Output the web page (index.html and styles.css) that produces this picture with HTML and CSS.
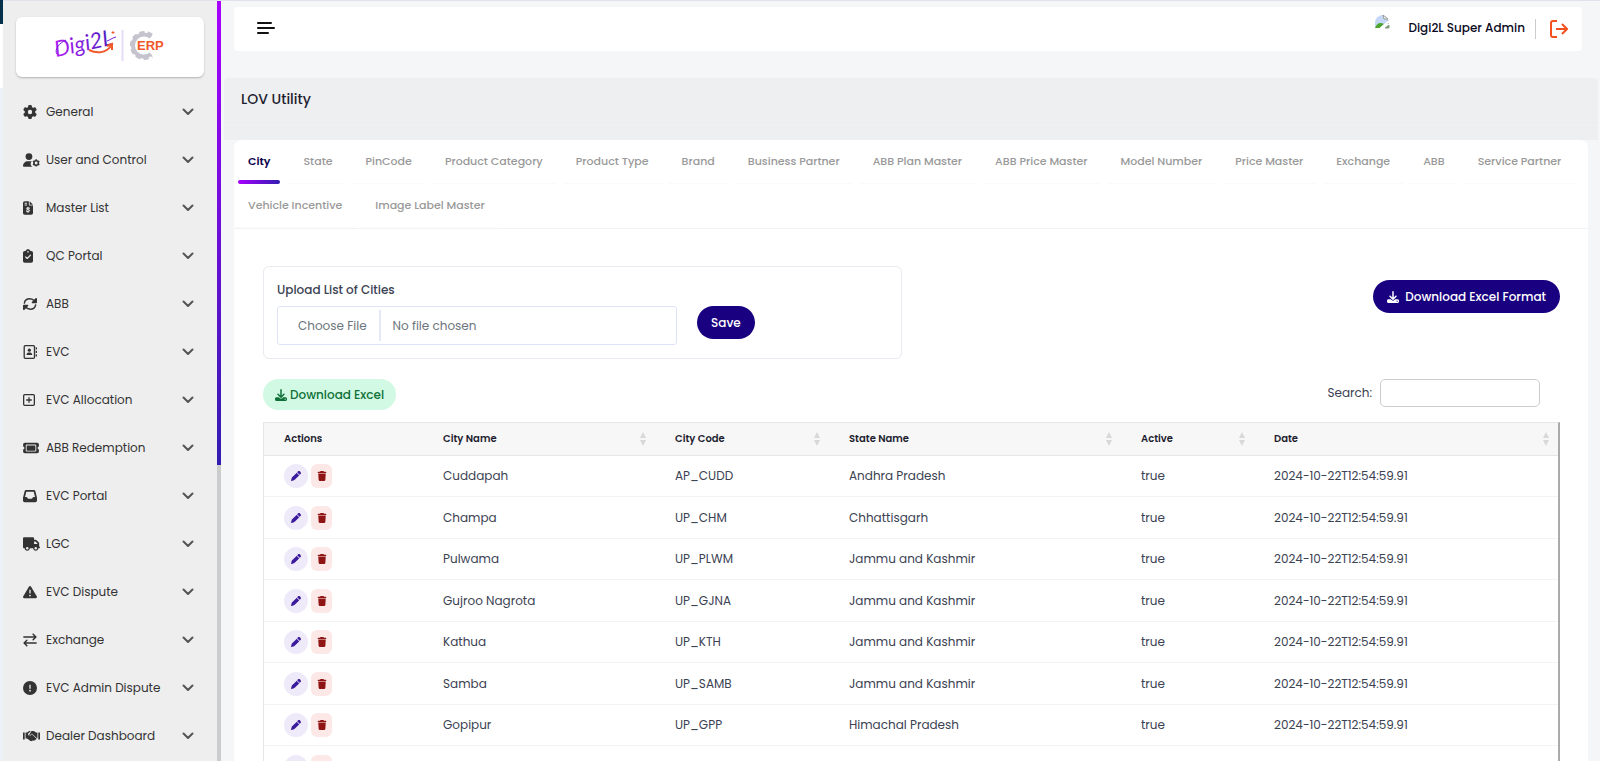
FILE: index.html
```html
<!DOCTYPE html>
<html lang="en">
<head>
  <meta charset="UTF-8">
  <meta name="viewport" content="width=device-width, initial-scale=1">
  <title>LOV Utility</title>
  <link rel="stylesheet" href="styles.css">
</head>
<body>
  <!-- icon sprite -->
  <svg class="sprite" aria-hidden="true">
    <symbol id="i-gear" viewBox="0 0 512 512"><path d="M495.9 166.6c3.2 8.7 .5 18.4-6.4 24.6l-43.3 39.4c1.1 8.3 1.7 16.8 1.7 25.4s-.6 17.1-1.7 25.4l43.3 39.4c6.9 6.2 9.6 15.9 6.4 24.6c-4.4 11.9-9.7 23.3-15.8 34.3l-4.7 8.1c-6.6 11-14 21.4-22.1 31.2c-5.9 7.2-15.7 9.6-24.5 6.8l-55.7-17.7c-13.4 10.3-28.2 18.9-44 25.4l-12.5 57.1c-2 9.1-9 16.3-18.2 17.8c-13.8 2.3-28 3.5-42.5 3.5s-28.7-1.2-42.5-3.5c-9.2-1.5-16.2-8.7-18.2-17.8l-12.5-57.1c-15.8-6.5-30.6-15.1-44-25.4L83.1 425.9c-8.8 2.8-18.6 .3-24.5-6.8c-8.1-9.8-15.5-20.2-22.1-31.2l-4.7-8.1c-6.1-11-11.4-22.4-15.8-34.3c-3.2-8.7-.5-18.4 6.4-24.6l43.3-39.4C64.6 273.1 64 264.6 64 256s.6-17.1 1.7-25.4L22.4 191.2c-6.9-6.2-9.6-15.9-6.4-24.6c4.4-11.9 9.7-23.3 15.8-34.3l4.7-8.1c6.6-11 14-21.4 22.1-31.2c5.9-7.2 15.7-9.6 24.5-6.8l55.7 17.7c13.4-10.3 28.2-18.9 44-25.4l12.5-57.1c2-9.1 9-16.3 18.2-17.8C227.3 1.2 241.5 0 256 0s28.7 1.2 42.5 3.5c9.2 1.5 16.2 8.7 18.2 17.8l12.5 57.1c15.8 6.5 30.6 15.1 44 25.4l55.7-17.7c8.8-2.8 18.6-.3 24.5 6.8c8.1 9.8 15.5 20.2 22.1 31.2l4.7 8.1c6.1 11 11.4 22.4 15.8 34.3zM256 336a80 80 0 1 0 0-160 80 80 0 1 0 0 160z"/></symbol>
    <symbol id="i-user-gear" viewBox="0 0 640 512"><path d="M224 0a128 128 0 1 1 0 256 128 128 0 1 1 0-256zM178.300 304h91.400c20.600 0 40.400 3.500 58.800 9.900a120 120 0 0 0 24 198.100H29.700C13.300 512 0 498.700 0 482.300 0 383.800 79.800 304 178.300 304z"/><circle cx="496" cy="368" r="84" fill="none" stroke="currentColor" stroke-width="60"/><path d="M496 232v48M496 456v48M378 300l42 24M572 412l42 24M378 436l42-24M572 324l42-24" stroke="currentColor" stroke-width="56"/></symbol>
    <symbol id="i-invoice" viewBox="0 0 384 512"><path fill-rule="evenodd" d="M64 0C28.700 0 0 28.700 0 64V448c0 35.300 28.700 64 64 64H320c35.300 0 64-28.700 64-64V160H256c-17.700 0-32-14.300-32-32V0H64zM256 0V128H384L256 0zM64 56H150V92H64zM64 120H150V156H64z"/><path class="knock" d="M246 264c-20-14-96-22-100 16-4 42 100 26 98 72-2 42-80 36-108 16M192 226v34M192 388v34"/></symbol>
    <symbol id="i-clipboard" viewBox="0 0 384 512"><path fill-rule="evenodd" d="M192 0c-41.800 0-77.400 26.700-90.500 64H64C28.700 64 0 92.700 0 128V448c0 35.300 28.700 64 64 64H320c35.300 0 64-28.700 64-64V128c0-35.300-28.700-64-64-64H282.500C269.400 26.700 233.800 0 192 0zm0 64a32 32 0 1 1 0 64 32 32 0 1 1 0-64z"/><path class="knock" d="M96 288l64 64 128-128"/></symbol>
    <symbol id="i-rotate" viewBox="0 0 512 512"><path class="line" d="M50 224C64 128 150 64 250 64c78 0 130 32 190 98M462 288c-14 96-100 160-200 160-78 0-130-32-190-98"/><path d="M480 32c18 0 32 14 32 30v138c0 16-12 30-30 30H346c-26 0-38-30-20-48L456 42c8-8 16-10 24-10zM32 480c-18 0-32-14-32-30V312c0-16 12-30 30-30h136c26 0 38 30 20 48L56 470c-8 8-16 10-24 10z"/></symbol>
    <symbol id="i-book" viewBox="0 0 512 512"><rect class="thin" x="44" y="24" width="376" height="464" rx="40"/><circle cx="232" cy="190" r="58"/><path d="M128 366c0-60 30-92 74-92h60c44 0 74 32 74 92zM464 80h24c13 0 24 8 24 24v40c0 14-10 24-24 24h-24zM464 208h24c13 0 24 8 24 24v40c0 14-10 24-24 24h-24zM464 336h24c13 0 24 8 24 24v40c0 14-10 24-24 24h-24z"/></symbol>
    <symbol id="i-plus-box" viewBox="0 0 448 512"><rect class="thin" x="24" y="56" width="400" height="400" rx="40"/><path class="thin" d="M224 168v176M136 256h176"/></symbol>
    <symbol id="i-ticket" viewBox="0 0 576 512"><path d="M64 64C28.700 64 0 92.700 0 128v64c0 8.800 7.400 15.700 15.700 18.600C34.500 217.100 48 235 48 256s-13.500 38.900-32.300 45.400C7.400 304.300 0 311.200 0 320v64c0 35.300 28.700 64 64 64H512c35.300 0 64-28.700 64-64V320c0-8.800-7.400-15.700-15.700-18.600C541.500 294.900 528 277 528 256s13.500-38.900 32.300-45.400c8.300-2.900 15.700-9.800 15.700-18.600V128c0-35.300-28.700-64-64-64H64zm64 112l0 160c0 8.800 7.200 16 16 16H432c8.800 0 16-7.200 16-16V176c0-8.800-7.200-16-16-16H144c-8.800 0-16 7.200-16 16zM96 160c0-17.700 14.300-32 32-32H448c17.700 0 32 14.300 32 32V352c0 17.700-14.300 32-32 32H128c-17.700 0-32-14.300-32-32V160z"/></symbol>
    <symbol id="i-inbox" viewBox="0 0 512 512"><path d="M121 32C91.600 32 66 52 58.900 80.500L1.900 308.400C.6 313.500 0 318.700 0 323.900V416c0 35.300 28.700 64 64 64H448c35.300 0 64-28.700 64-64V323.900c0-5.200-.6-10.400-1.900-15.500l-57-227.900C446 52 420.400 32 391 32H121zm0 64H391l48 192H387.800c-12.100 0-23.200 6.800-28.600 17.700l-14.300 28.600c-5.400 10.800-16.500 17.700-28.600 17.700H195.800c-12.100 0-23.200-6.800-28.600-17.700l-14.300-28.600c-5.400-10.800-16.500-17.700-28.600-17.700H73L121 96z"/></symbol>
    <symbol id="i-truck" viewBox="0 0 640 512"><path d="M48 0C21.500 0 0 21.500 0 48V368c0 26.500 21.500 48 48 48H64c0 53 43 96 96 96s96-43 96-96H384c0 53 43 96 96 96s96-43 96-96h32c17.700 0 32-14.300 32-32s-14.300-32-32-32V237.300c0-17-6.700-33.300-18.700-45.300L512 114.700c-12-12-28.300-18.700-45.300-18.700H416V48c0-26.500-21.500-48-48-48H48zM416 160h50.700L544 237.300V256H416V160zM112 416a48 48 0 1 1 96 0 48 48 0 1 1 -96 0zm368-48a48 48 0 1 1 0 96 48 48 0 1 1 0-96z"/></symbol>
    <symbol id="i-warning" viewBox="0 0 512 512"><path d="M256 32c14.200 0 27.300 7.500 34.500 19.800l216 368c7.300 12.400 7.300 27.700 .2 40.100S486.300 480 472 480H40c-14.300 0-27.600-7.700-34.700-20.100s-7-27.800 .2-40.100l216-368C228.700 39.500 241.800 32 256 32zm0 128c-13.300 0-24 10.700-24 24V296c0 13.300 10.700 24 24 24s24-10.700 24-24V184c0-13.300-10.700-24-24-24zm32 224a32 32 0 1 0 -64 0 32 32 0 1 0 64 0z"/></symbol>
    <symbol id="i-swap" viewBox="0 0 512 512"><path class="line" d="M32 144H470M370 42l102 102-102 102M480 368H42M142 266L40 368l102 102"/></symbol>
    <symbol id="i-alert" viewBox="0 0 512 512"><path d="M256 512A256 256 0 1 0 256 0a256 256 0 1 0 0 512zm0-384c13.300 0 24 10.700 24 24V264c0 13.300-10.700 24-24 24s-24-10.700-24-24V152c0-13.300 10.700-24 24-24zM224 352a32 32 0 1 1 64 0 32 32 0 1 1 -64 0z"/></symbol>
    <symbol id="i-handshake" viewBox="0 0 640 512"><path d="M0 128h64v256H0zM576 128h64v256h-64zM96 128h56l64-48c20-14 50-16 74-4l-84 78c-22 22-22 56 0 76 24 22 62 20 86-4l38-36 168 150c20 20 6 52-24 52-8 30-36 40-58 26-14 22-44 28-64 12-30 28-70 24-96-2L150 352H96zM312 80c30-20 84-20 110 0l66 48h56v208l-24-6-172-152c-10-10-22-6-32 2l-54 50c-16 14-38 4-34-16z"/></symbol>
    <symbol id="i-chevron" viewBox="0 0 12 8"><path d="M1.500 1.500L6 6l4.500-4.500" fill="none" stroke="currentColor" stroke-width="2" stroke-linecap="round" stroke-linejoin="round"/></symbol>
    <symbol id="i-pencil" viewBox="0 0 512 512"><path d="M410.300 231l11.300-11.300-33.900-33.900-62.100-62.100L291.700 89.800l-33.900 33.900L58.600 322.900c-10.400 10.400-18 23.300-22.200 37.400L1 480.700c-2.500 8.400-.2 17.500 6.100 23.700s15.300 8.500 23.700 6.100l120.300-35.400c14.100-4.200 27-11.800 37.400-22.200L387.700 253.700 410.300 231zM362.700 18.700L314.300 67.100l130 130 48.400-48.400c25-25 25-65.500 0-90.500L453.300 18.700c-25-25-65.500-25-90.500 0z"/></symbol>
    <symbol id="i-trash" viewBox="0 0 448 512"><path d="M135.200 17.700L128 32H32C14.300 32 0 46.300 0 64S14.300 96 32 96H416c17.700 0 32-14.300 32-32s-14.300-32-32-32H320l-7.200-14.300C307.400 6.800 296.300 0 284.200 0H163.800c-12.100 0-23.200 6.800-28.600 17.700zM416 128H32L53.200 467c1.600 25.300 22.600 45 47.900 45H346.900c25.300 0 46.300-19.700 47.900-45L416 128z"/></symbol>
    <symbol id="i-download" viewBox="0 0 512 512"><path d="M288 32c0-17.700-14.300-32-32-32s-32 14.300-32 32V274.700l-73.400-73.400c-12.500-12.500-32.800-12.500-45.300 0s-12.500 32.800 0 45.300l128 128c12.500 12.500 32.800 12.500 45.300 0l128-128c12.500-12.500 12.500-32.800 0-45.300s-32.800-12.500-45.300 0L288 274.700V32zM64 352c-35.300 0-64 28.700-64 64v32c0 35.300 28.700 64 64 64H448c35.300 0 64-28.700 64-64V416c0-35.300-28.700-64-64-64H346.500l-45.300 45.300c-25 25-65.500 25-90.500 0L165.500 352H64zm368 56a24 24 0 1 1 0 48 24 24 0 1 1 0-48z"/></symbol>
    <symbol id="i-sort" viewBox="0 0 6 14"><path d="M3 0l3 6H0zM3 14L0 8h6z"/></symbol>
  </svg>

  <div class="layout">
    <div class="edge"></div>
    <aside class="sidebar">
      <div class="sidebar_inner">
        <a class="logo" href="#" aria-label="Digi2L ERP">
          <svg width="118" height="44" viewBox="-4 -5 118 44">
            <defs>
              <linearGradient id="brand" x1="0" x2="1"><stop offset="0" stop-color="#b21cf5"/><stop offset="1" stop-color="#4b1cc0"/></linearGradient>
            </defs>
            <text class="logo_script" x="1" y="27" transform="rotate(-12 1 27)">Digi2L</text>
            <path d="M52 11c3-1 5-3 9-4M2 24c-3-4 2-11 9-14" fill="none" stroke="#7a1ee0"/>
            <path d="M34 20c8 4 17 3 22-4M52 16l5-2v6" fill="none" stroke="#f1592a" stroke-width="2"/>
            <path d="M58 1v3M56.500 2.500h3" stroke="#f1592a"/>
            <path d="M67.500 0v31" stroke="#e6dcf8" stroke-width="2"/>
            <path d="M96 7a11 11 0 1 0 0 17" fill="none" stroke="#c5c3cd" stroke-width="4"/>
            <path d="M97 5a13 13 0 1 0 0 21" fill="none" stroke="#c5c3cd" stroke-width="3" stroke-dasharray="5 3"/>
            <text class="logo_erp" x="82" y="20">ERP</text>
          </svg>
        </a>
        <nav class="menu">
          <button type="button"><svg class="w14"><use href="#i-gear"/></svg><span>General</span><svg class="chev"><use href="#i-chevron"/></svg></button>
          <button type="button"><svg class="w17"><use href="#i-user-gear"/></svg><span>User and Control</span><svg class="chev"><use href="#i-chevron"/></svg></button>
          <button type="button"><svg class="w10"><use href="#i-invoice"/></svg><span>Master List</span><svg class="chev"><use href="#i-chevron"/></svg></button>
          <button type="button"><svg class="w10"><use href="#i-clipboard"/></svg><span>QC Portal</span><svg class="chev"><use href="#i-chevron"/></svg></button>
          <button type="button"><svg class="w14"><use href="#i-rotate"/></svg><span>ABB</span><svg class="chev"><use href="#i-chevron"/></svg></button>
          <button type="button"><svg class="w14"><use href="#i-book"/></svg><span>EVC</span><svg class="chev"><use href="#i-chevron"/></svg></button>
          <button type="button"><svg class="w12"><use href="#i-plus-box"/></svg><span>EVC Allocation</span><svg class="chev"><use href="#i-chevron"/></svg></button>
          <button type="button"><svg class="w16"><use href="#i-ticket"/></svg><span>ABB Redemption</span><svg class="chev"><use href="#i-chevron"/></svg></button>
          <button type="button"><svg class="w14"><use href="#i-inbox"/></svg><span>EVC Portal</span><svg class="chev"><use href="#i-chevron"/></svg></button>
          <button type="button"><svg class="w17"><use href="#i-truck"/></svg><span>LGC</span><svg class="chev"><use href="#i-chevron"/></svg></button>
          <button type="button"><svg class="w14"><use href="#i-warning"/></svg><span>EVC Dispute</span><svg class="chev"><use href="#i-chevron"/></svg></button>
          <button type="button"><svg class="w14"><use href="#i-swap"/></svg><span>Exchange</span><svg class="chev"><use href="#i-chevron"/></svg></button>
          <button type="button"><svg class="w14"><use href="#i-alert"/></svg><span>EVC Admin Dispute</span><svg class="chev"><use href="#i-chevron"/></svg></button>
          <button type="button"><svg class="w17"><use href="#i-handshake"/></svg><span>Dealer Dashboard</span><svg class="chev"><use href="#i-chevron"/></svg></button>
        </nav>
      </div>
      <div class="scroll_track"><div class="scroll_thumb"></div></div>
    </aside>

    <main class="main">
      <header class="topbar">
        <button type="button" class="icon_button" aria-label="Toggle menu">
          <svg width="18" height="14" viewBox="0 0 18 14"><path d="M1 2h13M1 7h16M1 12h10" stroke="#111" stroke-width="2" stroke-linecap="round"/></svg>
        </button>
        <div class="user">
          <svg class="avatar" width="16" height="16" viewBox="0 0 16 16">
            <path d="M1 14V9a8 8 0 0 1 8-8l5 4v4l-8 5z" fill="#c5d8f7"/>
            <path d="M1 14c2-5 5-6 9-4l-4 4z" fill="#4ca52f"/>
            <path d="M9 1l5 4h-4z" fill="#fff" stroke="#999"/>
            <path d="M14 6v4M11 14h4v-3z" stroke="#999" fill="#4ca52f"/>
            <path d="M6 15l9-8" stroke="#fff" stroke-width="2"/>
          </svg>
          <span class="user_name">Digi2L Super Admin</span>
          <a class="logout" href="#" aria-label="Log out">
            <svg width="18" height="18" viewBox="0 0 18 18"><path d="M7 1H3a2 2 0 0 0-2 2v12a2 2 0 0 0 2 2h4M6 9h11M12 4l5 5-5 5" fill="none" stroke="#f4511e" stroke-width="2"/></svg>
          </a>
        </div>
      </header>

      <div class="page_head">
        <h1>LOV Utility</h1>
      </div>

      <section class="card">
        <nav class="tabs">
          <a class="active" href="#">City</a>
          <a href="#">State</a>
          <a href="#">PinCode</a>
          <a href="#">Product Category</a>
          <a href="#">Product Type</a>
          <a href="#">Brand</a>
          <a href="#">Business Partner</a>
          <a href="#">ABB Plan Master</a>
          <a href="#">ABB Price Master</a>
          <a href="#">Model Number</a>
          <a href="#">Price Master</a>
          <a href="#">Exchange</a>
          <a href="#">ABB</a>
          <a href="#">Service Partner</a>
          <a href="#">Vehicle Incentive</a>
          <a href="#">Image Label Master</a>
        </nav>

        <div class="card_body">
          <div class="upload_row">
            <form class="upload">
              <label for="city_file">Upload List of Cities</label>
              <div class="upload_fields">
                <input type="file" id="city_file">
                <button type="button" class="btn btn_primary">Save</button>
              </div>
            </form>
            <button type="button" class="btn btn_primary"><svg><use href="#i-download"/></svg>Download Excel Format</button>
          </div>

          <div class="table_tools">
            <button type="button" class="btn btn_success"><svg><use href="#i-download"/></svg>Download Excel</button>
            <div class="search">
              <label for="search">Search:</label>
              <input type="search" id="search">
            </div>
          </div>

          <table class="grid">
            <colgroup><col class="c_actions"><col class="c_city"><col class="c_code"><col class="c_state"><col class="c_active"><col></colgroup>
            <thead>
              <tr>
                <th>Actions</th>
                <th><div>City Name<svg><use href="#i-sort"/></svg></div></th>
                <th><div>City Code<svg><use href="#i-sort"/></svg></div></th>
                <th><div>State Name<svg><use href="#i-sort"/></svg></div></th>
                <th><div>Active<svg><use href="#i-sort"/></svg></div></th>
                <th><div>Date<svg><use href="#i-sort"/></svg></div></th>
              </tr>
            </thead>
            <tbody>
              <tr>
                <td><div class="actions"><button type="button" class="edit" aria-label="Edit"><svg><use href="#i-pencil"/></svg></button><button type="button" class="delete" aria-label="Delete"><svg><use href="#i-trash"/></svg></button></div></td>
                <td>Cuddapah</td><td>AP_CUDD</td><td>Andhra Pradesh</td><td>true</td><td>2024-10-22T12:54:59.91</td>
              </tr>
              <tr>
                <td><div class="actions"><button type="button" class="edit" aria-label="Edit"><svg><use href="#i-pencil"/></svg></button><button type="button" class="delete" aria-label="Delete"><svg><use href="#i-trash"/></svg></button></div></td>
                <td>Champa</td><td>UP_CHM</td><td>Chhattisgarh</td><td>true</td><td>2024-10-22T12:54:59.91</td>
              </tr>
              <tr>
                <td><div class="actions"><button type="button" class="edit" aria-label="Edit"><svg><use href="#i-pencil"/></svg></button><button type="button" class="delete" aria-label="Delete"><svg><use href="#i-trash"/></svg></button></div></td>
                <td>Pulwama</td><td>UP_PLWM</td><td>Jammu and Kashmir</td><td>true</td><td>2024-10-22T12:54:59.91</td>
              </tr>
              <tr>
                <td><div class="actions"><button type="button" class="edit" aria-label="Edit"><svg><use href="#i-pencil"/></svg></button><button type="button" class="delete" aria-label="Delete"><svg><use href="#i-trash"/></svg></button></div></td>
                <td>Gujroo Nagrota</td><td>UP_GJNA</td><td>Jammu and Kashmir</td><td>true</td><td>2024-10-22T12:54:59.91</td>
              </tr>
              <tr>
                <td><div class="actions"><button type="button" class="edit" aria-label="Edit"><svg><use href="#i-pencil"/></svg></button><button type="button" class="delete" aria-label="Delete"><svg><use href="#i-trash"/></svg></button></div></td>
                <td>Kathua</td><td>UP_KTH</td><td>Jammu and Kashmir</td><td>true</td><td>2024-10-22T12:54:59.91</td>
              </tr>
              <tr>
                <td><div class="actions"><button type="button" class="edit" aria-label="Edit"><svg><use href="#i-pencil"/></svg></button><button type="button" class="delete" aria-label="Delete"><svg><use href="#i-trash"/></svg></button></div></td>
                <td>Samba</td><td>UP_SAMB</td><td>Jammu and Kashmir</td><td>true</td><td>2024-10-22T12:54:59.91</td>
              </tr>
              <tr>
                <td><div class="actions"><button type="button" class="edit" aria-label="Edit"><svg><use href="#i-pencil"/></svg></button><button type="button" class="delete" aria-label="Delete"><svg><use href="#i-trash"/></svg></button></div></td>
                <td>Gopipur</td><td>UP_GPP</td><td>Himachal Pradesh</td><td>true</td><td>2024-10-22T12:54:59.91</td>
              </tr>
              <tr>
                <td><div class="actions"><button type="button" class="edit" aria-label="Edit"><svg><use href="#i-pencil"/></svg></button><button type="button" class="delete" aria-label="Delete"><svg><use href="#i-trash"/></svg></button></div></td>
                <td></td><td></td><td></td><td></td><td></td>
              </tr>
            </tbody>
          </table>
        </div>
      </section>
    </main>
  </div>
</body>
</html>
```

FILE: styles.css
```css
* {
  box-sizing: border-box;
}

body {
  margin: 0;
  background-color: #f5f6f8;
  color: #3b4252;
  font-family: Poppins, Inter, "Open Sans", sans-serif;
  font-size: 12px;
}

button,
input {
  font-family: inherit;
  font-size: inherit;
}

button {
  border: 0;
  padding: 0;
  cursor: pointer;
}

a {
  text-decoration: none;
}

svg {
  flex: none;
  fill: currentColor;
}

.sprite {
  display: none;
}

.line {
  fill: none;
  stroke: currentColor;
  stroke-width: 54;
  stroke-linecap: round;
  stroke-linejoin: round;
}

.thin {
  fill: none;
  stroke: currentColor;
  stroke-width: 48;
  stroke-linecap: round;
}

.knock {
  fill: none;
  stroke: #eee;
  stroke-width: 44;
  stroke-linecap: round;
  stroke-linejoin: round;
}

.layout {
  display: flex;
  height: 100vh;
  overflow: hidden;
}

/* strip left of the sidebar */
.edge {
  flex: none;
  width: 3px;
  background: linear-gradient(#06304a 24px, #fff 24px, #fff 88px, #ecf1f7 88px);
}

/* sidebar */
.sidebar {
  display: flex;
  flex: none;
  width: 218px;
  border-top: 1px solid #e2e2ee;
  background-color: #eee;
}

.sidebar_inner {
  flex: 1;
  overflow: hidden;
  padding: 16px 13px 0;
}

.logo {
  display: flex;
  align-items: center;
  justify-content: center;
  height: 60px;
  border-radius: 6px;
  background-color: #fff;
  box-shadow: 0 1px 2px rgba(0, 0, 0, 0.25);
}

.logo_script {
  fill: url(#brand);
  font-family: Lato, sans-serif;
  font-size: 22px;
  font-style: italic;
}

.logo_erp {
  fill: #f1592a;
  font-family: "Liberation Sans", sans-serif;
  font-size: 13px;
  font-weight: 700;
}

.menu {
  padding-top: 11px;
}

.menu button {
  display: grid;
  grid-template-columns: 23px 1fr 12px;
  align-items: center;
  width: 100%;
  height: 48px;
  padding: 0 10px 0 7px;
  background: none;
  color: #333;
  font-size: 12px;
  text-align: left;
}

.menu svg {
  height: 14px;
}

.w10 { width: 10px; }
.w12 { width: 12px; }
.w14 { width: 14px; }
.w16 { width: 16px; }
.w17 { width: 17px; }

.menu .chev {
  width: 12px;
  height: 8px;
  color: #555;
}

.scroll_track {
  width: 4px;
  background-color: #ccc;
}

.scroll_thumb {
  height: 61%;
  background: linear-gradient(#a700ff, #321cb0);
}

/* main */
.main {
  flex: 1;
  min-width: 0;
  overflow: hidden;
  border-top: 1px solid #e2e2ee;
}

.topbar {
  display: flex;
  align-items: center;
  justify-content: space-between;
  height: 44px;
  margin: 6px 18px 27px 13px;
  padding: 0 14px 0 23px;
  border-radius: 4px;
  background-color: #fff;
}

.icon_button {
  display: flex;
  align-items: center;
  height: 18px;
  margin-bottom: 3px;
  background: none;
}

.user {
  display: flex;
  align-items: center;
}

.avatar {
  margin: 0 18px 14px 0;
}

.user_name {
  padding-bottom: 2px;
  color: #0a0a23;
  font-size: 12px;
  font-weight: 500;
}

.logout {
  display: flex;
  align-items: center;
  height: 20px;
  margin-left: 10px;
  padding-left: 14px;
  border-left: 1px solid #ccc;
}

.page_head {
  height: 62px;
  margin: 0 2px 0 3px;
  border-radius: 4px 4px 0 0;
  background-color: #eeeff1;
}

.page_head h1 {
  height: 45px;
  margin: 0;
  padding: 0 17px;
  border-bottom: 1px solid #ebecee;
  color: #1e1e2f;
  font-size: 14px;
  font-weight: 500;
  line-height: 43px;
}

.card {
  margin: 0 12px 0 13px;
  border-radius: 8px 8px 0 0;
  background-color: #fff;
}

.tabs {
  display: flex;
  flex-wrap: wrap;
  column-gap: 7px;
  padding: 0 11px 0 1px;
  border-bottom: 1px solid #f2f3f4;
}

.tabs a {
  height: 44px;
  padding: 0 13px;
  border-bottom: 1px solid #fafafa;
  color: #999;
  font-size: 11px;
  font-weight: 500;
  line-height: 43px;
}

.tabs .active {
  display: flex;
  flex-direction: column;
  border-bottom: 0;
  color: #0d004d;
  font-weight: 600;
}

.tabs .active::after {
  content: "";
  flex: none;
  height: 4px;
  margin: -3px -10px 0;
  border-radius: 4px;
  background: linear-gradient(90deg, #a700ff, #321cb0);
}

.card_body {
  padding: 37px 28px 0 29px;
}

.upload_row {
  display: flex;
  align-items: flex-start;
  justify-content: space-between;
}

.upload {
  width: 639px;
  height: 93px;
  padding: 13px;
  border: 1px solid #e9e9ef;
  border-radius: 6px;
}

.upload label {
  display: block;
  height: 26px;
  font-size: 12px;
  font-weight: 500;
  line-height: 20px;
}

.upload_fields {
  display: flex;
  align-items: flex-start;
  gap: 20px;
}

.upload input {
  width: 400px;
  height: 39px;
  padding: 3px 0;
  border: 1px solid #dfe3f7;
  border-radius: 3px;
  color: #6c757d;
  font-size: 12px;
  line-height: 31px;
}

.upload input::file-selector-button {
  height: 31px;
  margin-right: 12px;
  padding: 0 12px 0 20px;
  border: 0;
  border-right: 2px solid #e4e9f7;
  background: none;
  color: #6c757d;
  font: inherit;
}

.btn {
  display: flex;
  align-items: center;
  height: 33px;
  padding: 0 14px;
  border-radius: 17px;
  font-size: 12px;
  font-weight: 500;
}

.btn svg {
  width: 12px;
  height: 12px;
  margin-right: 6px;
}

.btn_primary {
  background-color: #190080;
  color: #fff;
}

.upload_row > .btn {
  margin-top: 14px;
}

.btn_success {
  height: 31px;
  padding: 0 12px;
  background-color: #d1f9e3;
  color: #0f7038;
}

.btn_success svg {
  margin-right: 3px;
}

.table_tools {
  display: flex;
  align-items: flex-start;
  justify-content: space-between;
  height: 43px;
  margin-top: 20px;
}

.search {
  display: flex;
  align-items: center;
  gap: 8px;
  margin-right: 20px;
}

.search input {
  width: 160px;
  height: 28px;
  border: 1px solid #ccc;
  border-radius: 5px;
  background-color: #fff;
}

/* table */
.grid {
  width: 100%;
  border: 1px solid #e5e5ea;
  border-right: 2px solid #aaa;
  border-spacing: 0;
  table-layout: fixed;
}

.c_actions { width: 159px; }
.c_city { width: 232px; }
.c_code { width: 174px; }
.c_state { width: 292px; }
.c_active { width: 133px; }

.grid th,
.grid td {
  padding: 0 0 0 20px;
  border-bottom: 1px solid #f3f3f5;
  text-align: left;
}

.grid th {
  height: 33px;
  padding-right: 9px;
  border-bottom-color: #e5e5ea;
  background-color: #f7f7f7;
  color: #1e1e2f;
  font-size: 10px;
  font-weight: 600;
}

.grid th div {
  display: flex;
  align-items: center;
  justify-content: space-between;
}

.grid th svg {
  width: 6px;
  height: 14px;
  color: #d8d8d8;
}

.grid td {
  height: 41px;
  font-size: 12px;
}

.grid tr:nth-child(even) td {
  height: 42px;
}

.actions {
  display: flex;
  align-items: center;
  gap: 3px;
}

.edit,
.delete {
  display: flex;
  align-items: center;
  justify-content: center;
  height: 24px;
}

.edit {
  width: 24px;
  border-radius: 50%;
  background-color: #eeeafa;
  color: #3c1a9c;
}

.delete {
  width: 21px;
  border-radius: 6px;
  background-color: #fde8e8;
  color: #8f1414;
}

.actions svg {
  width: 10px;
  height: 10px;
}
```
